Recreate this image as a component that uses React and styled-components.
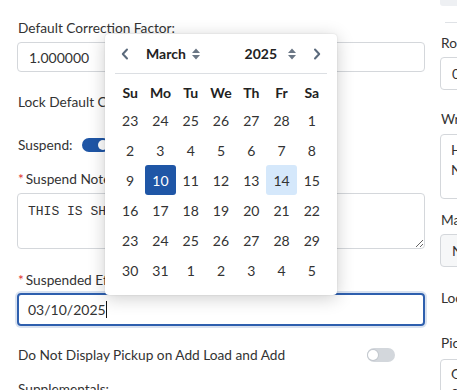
import React from 'react'
import styled, { createGlobalStyle } from 'styled-components'

const GlobalStyle = createGlobalStyle`
    html, body {
        margin: 0;
        padding: 0;
        overflow: hidden;
        background: #ffffff;
    }
    body {
        font-family: Lato, "Open Sans", sans-serif;
        color: #333333;
    }
`

const Page = styled.div`
    display: grid;
    grid-template-columns: 408px 220px;
    column-gap: 15px;
    padding-left: 17px;
    width: 700px;
`

const Column = styled.div`
    display: flex;
    flex-direction: column;
`

const Field = styled.div`
    position: relative;
    display: flex;
    flex-direction: column;
    margin-top: ${(p) => p.$mt || 0}px;
`

const Label = styled.div`
    font-size: 13.7px;
    line-height: 20px;
    color: #333;
    padding-left: 1px;
    margin-bottom: ${(p) => p.$mb || 0}px;
    white-space: nowrap;
`

const Required = styled.span`
    color: #e0302d;
    margin-right: 2px;
`

const TextInput = styled.div`
    box-sizing: border-box;
    height: ${(p) => p.$h || 30}px;
    border: 1px solid #d4d7db;
    border-radius: 4px;
    padding: 0 11px;
    display: flex;
    align-items: center;
    font-size: 14px;
    color: #333;
    background: ${(p) => (p.$muted ? '#f6f7f8' : '#fff')};
    overflow: hidden;
    white-space: nowrap;
`

const FocusInput = styled.div`
    box-sizing: border-box;
    height: 33px;
    border: 2px solid #2e5fae;
    border-radius: 4px;
    box-shadow: 0 0 0 2px rgba(46, 95, 174, 0.18);
    padding: 0 9px;
    display: flex;
    align-items: center;
    font-size: 14px;
    color: #333;
`

const Caret = styled.span`
    display: inline-block;
    width: 1px;
    height: 17px;
    background: #111;
`

const NoteArea = styled.textarea`
    box-sizing: border-box;
    height: ${(p) => p.$h || 56}px;
    border: 1px solid #d4d7db;
    border-radius: 4px;
    padding: 9px 10px;
    font-family: "Liberation Mono", monospace;
    font-size: 13px;
    line-height: 17px;
    color: #333;
    resize: vertical;
    outline: none;
    margin: 0;
`

const SmallArea = styled.div`
    box-sizing: border-box;
    height: ${(p) => p.$h || 56}px;
    border: 1px solid #d4d7db;
    border-radius: 4px;
    padding: ${(p) => p.$pt || 7}px 10px 0;
    font-size: 14px;
    line-height: 20px;
    color: #333;
`

const InlineRow = styled.div`
    display: flex;
    align-items: center;
    gap: 10px;
`

const SplitRow = styled.div`
    display: flex;
    align-items: flex-start;
    justify-content: space-between;
    width: 378px;
`

const LongLabel = styled.div`
    font-size: 13.7px;
    line-height: 34px;
    width: 330px;
    padding-left: 1px;
`

const Toggle = styled.div`
    position: relative;
    flex: none;
    width: 28px;
    height: 14px;
    border-radius: 7px;
    background: ${(p) => (p.$on ? '#1f56a6' : '#d3d7dc')};
    margin-top: ${(p) => p.$mt || 0}px;

    &::after {
        content: '';
        position: absolute;
        top: 2px;
        left: ${(p) => (p.$on ? '16px' : '1px')};
        width: 10px;
        height: 10px;
        border-radius: 50%;
        background: #fff;
        box-shadow: ${(p) => (p.$on ? 'none' : '0 0 0 1px #c3c8ce')};
    }
`

const Popup = styled.div`
    position: absolute;
    left: 88px;
    bottom: 31px;
    width: 232px;
    box-sizing: border-box;
    padding: 0 10px 10px;
    background: #fff;
    border-radius: 4px;
    box-shadow: 0 3px 18px rgba(0, 0, 0, 0.2), 0 0 2px rgba(0, 0, 0, 0.12);
    z-index: 5;
`

const CalHeader = styled.div`
    box-sizing: border-box;
    height: 40px;
    display: flex;
    align-items: center;
    border-bottom: 1px solid #dcdfe3;
    padding: 0 6px;
`

const NavButton = styled.span`
    display: flex;
    align-items: center;
    color: #5b6a7c;
`

const Select = styled.span`
    display: flex;
    align-items: center;
    gap: ${(p) => p.$gap}px;
    margin-left: ${(p) => p.$ml || 0}px;
    margin-right: ${(p) => p.$mr || 0}px;
    font-size: 14px;
    font-weight: 700;
    color: #222;
`

const Spacer = styled.span`
    flex: 1;
`

const DayGrid = styled.div`
    display: grid;
    grid-template-columns: repeat(7, 1fr);
    grid-template-rows: 25px;
    grid-auto-rows: 30px;
    margin-top: 6px;
`

const WeekDay = styled.div`
    display: flex;
    align-items: center;
    justify-content: center;
    font-size: 14px;
    font-weight: 700;
    color: #222;
`

const Day = styled.div`
    display: flex;
    align-items: center;
    justify-content: center;
    font-size: 14px;
    border-radius: 3px;
    color: ${(p) => (p.$selected ? '#fff' : '#333')};
    background: ${(p) => (p.$selected ? '#1f56a6' : p.$today ? '#d5e8fb' : 'transparent')};
`

const TopTab = styled.div`
    height: 6px;
    background: #eef0f3;
    border-radius: 0 0 3px 3px;
`

const Divider = styled.div`
    height: 1px;
    background: #dfe2e6;
    margin: 16px 0 0 5px;
`

const Chevron = ({ dir }) => (
    <svg width="8" height="12" viewBox="0 0 8 12">
        <path
            d={dir === 'left' ? 'M6 1.5 L1.8 6 L6 10.5' : 'M2 1.5 L6.2 6 L2 10.5'}
            fill="none"
            stroke="currentColor"
            strokeWidth="2"
            strokeLinecap="round"
            strokeLinejoin="round"
        />
    </svg>
)

const UpDown = () => (
    <svg width="8" height="12" viewBox="0 0 8 12">
        <path d="M4 0.5 L8 5 L0 5 Z M0 7 L8 7 L4 11.5 Z" fill="#6b7785" />
    </svg>
)

const days = [
    23, 24, 25, 26, 27, 28, 1,
    2, 3, 4, 5, 6, 7, 8,
    9, 10, 11, 12, 13, 14, 15,
    16, 17, 18, 19, 20, 21, 22,
    23, 24, 25, 26, 27, 28, 29,
    30, 31, 1, 2, 3, 4, 5,
]

const weekDays = ['Su', 'Mo', 'Tu', 'We', 'Th', 'Fr', 'Sa']

function Calendar() {
    return (
        <Popup>
            <CalHeader>
                <NavButton>
                    <Chevron dir="left" />
                </NavButton>
                <Select $gap={6} $ml={17}>
                    March <UpDown />
                </Select>
                <Spacer />
                <Select $gap={11} $mr={17}>
                    2025 <UpDown />
                </Select>
                <NavButton>
                    <Chevron dir="right" />
                </NavButton>
            </CalHeader>
            <DayGrid>
                {weekDays.map((d) => (
                    <WeekDay key={d}>{d}</WeekDay>
                ))}
                {days.map((d, i) => (
                    <Day key={i} $selected={i === 15} $today={i === 19}>
                        {d}
                    </Day>
                ))}
            </DayGrid>
        </Popup>
    )
}

export default function App() {
    return (
        <>
            <GlobalStyle />
            <Page>
                <Column>
                    <Field $mt={18}>
                        <Label $mb={4}>Default Correction Factor:</Label>
                        <TextInput>1.000000</TextInput>
                    </Field>
                    <Field $mt={20}>
                        <Label>Lock Default Correction Factor:</Label>
                    </Field>
                    <Field $mt={23}>
                        <InlineRow>
                            <Label>Suspend:</Label>
                            <Toggle $on />
                        </InlineRow>
                    </Field>
                    <Field $mt={14}>
                        <Label $mb={4}>
                            <Required>*</Required>Suspend Notes:
                        </Label>
                        <NoteArea readOnly defaultValue="THIS IS SHIPPER SUSPENSION NOTE" />
                    </Field>
                    <Field $mt={21}>
                        <Label $mb={3}>
                            <Required>*</Required>Suspended Effective Date:
                        </Label>
                        <Field>
                            <FocusInput>
                                03/10/2025
                                <Caret />
                            </FocusInput>
                            <Calendar />
                        </Field>
                    </Field>
                    <Field $mt={12}>
                        <SplitRow>
                            <LongLabel>Do Not Display Pickup on Add Load and Add Supplementals:</LongLabel>
                            <Toggle $mt={10} />
                        </SplitRow>
                    </Field>
                </Column>
                <Column>
                    <TopTab />
                    <Divider />
                    <Field $mt={10}>
                        <Label $mb={4}>Routing Code:</Label>
                        <TextInput $h={33}>0</TextInput>
                    </Field>
                    <Field $mt={19}>
                        <Label $mb={5}>Written Instructions:</Label>
                        <SmallArea $h={65} $pt={5}>
                            H<br />N
                        </SmallArea>
                    </Field>
                    <Field $mt={11}>
                        <Label $mb={4}>Max Weight:</Label>
                        <TextInput $h={33} $muted>
                            N
                        </TextInput>
                    </Field>
                    <Field $mt={21}>
                        <Label>Lock Pickup:</Label>
                    </Field>
                    <Field $mt={25}>
                        <Label $mb={6}>Pickup Notes:</Label>
                        <SmallArea $h={60} $pt={4}>
                            G<br />0
                        </SmallArea>
                    </Field>
                </Column>
            </Page>
        </>
    )
}
